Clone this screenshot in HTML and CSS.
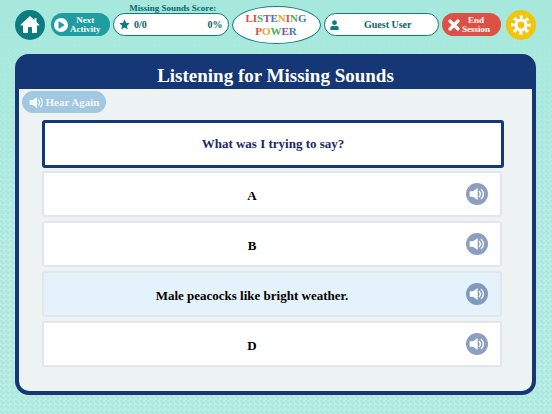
FILE: index.html
```html
<!DOCTYPE html>
<html lang="en">
<head>
  <meta charset="UTF-8">
  <meta name="viewport" content="width=device-width, initial-scale=1">
  <title>Listening for Missing Sounds</title>
  <link rel="stylesheet" href="styles.css">
</head>
<body>

<!-- shared speaker icon -->
<svg class="sprite" aria-hidden="true">
  <symbol id="speaker" viewBox="0 0 24 24">
    <path d="M1 8h5l7-5v18l-7-5H1z" fill="currentColor"/>
    <path d="M15.500 8q3 4 0 8M18.500 5q6 7 0 14" fill="none" stroke="currentColor" stroke-width="2" stroke-linecap="round"/>
  </symbol>
</svg>

<header class="topbar">
  <button class="round home" aria-label="Home">
    <svg viewBox="0 0 20 20" width="20" height="20"><path d="M10 1 .8 9.6q-.6.9.5.9H3V17q0 1 1 1h4v-5q0-1 1-1h2q1 0 1 1v5h4q1 0 1-1v-6.500h1.700q1.100 0 .5-.9L16.500 7V3h-2v2.100z" fill="#fff"/></svg>
  </button>

  <button class="pill next">
    <svg viewBox="0 0 14 14" width="14" height="14"><circle cx="7" cy="7" r="7" fill="#fff"/><path d="M4.500 4v6q0 .8.8.4L10 7.600q.8-.6 0-1.200L5.300 3.600q-.8-.4-.8.4z" fill="#1f9da0"/></svg>
    <span>Next<br>Activity</span>
  </button>

  <div class="score">
    <div class="score-label">Missing Sounds Score:</div>
    <div class="field">
      <svg viewBox="0 0 12 12" width="11" height="11"><path d="m6 .3 1.700 3.700 4 .5-3 2.800.8 4L6 9.300l-3.500 2 .8-4-3-2.800 4-.5z" fill="#0c7c80"/></svg>
      <span class="points">0/0</span>
      <span>0%</span>
    </div>
  </div>

  <div class="logo">
    <div><span class="red">L</span><span class="red">I</span><span class="green">S</span><span class="purple">T</span><span class="blue">E</span><span class="orange">N</span><span class="red">I</span><span class="green">N</span><span class="blue">G</span></div>
    <div><span class="red">P</span><span class="orange">O</span><span class="green">W</span><span class="purple">E</span><span class="blue">R</span></div>
  </div>

  <div class="user">
    <div class="field">
      <svg viewBox="0 0 10 12" width="9" height="10"><circle cx="5" cy="3.200" r="2.900" fill="#0c7c80"/><path d="M0 12v-2q0-3 3-3 2 1 4 0 3 0 3 3v2z" fill="#0c7c80"/></svg>
      <span class="name">Guest User</span>
    </div>
  </div>

  <button class="pill end">
    <svg viewBox="0 0 12 12" width="12" height="12"><path d="m2 2 8 8M10 2l-8 8" stroke="#fff" stroke-width="3.200" stroke-linecap="round"/></svg>
    <span>End<br>Session</span>
  </button>

  <button class="round settings" aria-label="Settings">
    <svg viewBox="0 0 20 20" width="20" height="20">
      <g fill="none" stroke="#fff">
        <circle cx="10" cy="10" r="5" stroke-width="3.200"/>
        <circle cx="10" cy="10" r="8" stroke-width="3.600" stroke-dasharray="3 3.283" stroke-dashoffset="1.500"/>
      </g>
    </svg>
  </button>
</header>

<main class="panel">
  <h1>Listening for Missing Sounds</h1>
  <div class="content">
    <button class="hear">
      <svg width="15" height="15"><use href="#speaker"/></svg>
      Hear Again
    </button>

    <div class="question">What was I trying to say?</div>

    <div class="answers">
      <div class="answer">
        <button class="choice">A</button>
        <button class="listen" aria-label="Listen to A"><svg width="16" height="16"><use href="#speaker"/></svg></button>
      </div>
      <div class="answer">
        <button class="choice">B</button>
        <button class="listen" aria-label="Listen to B"><svg width="16" height="16"><use href="#speaker"/></svg></button>
      </div>
      <div class="answer active">
        <button class="choice">Male peacocks like bright weather.</button>
        <button class="listen" aria-label="Listen to C"><svg width="16" height="16"><use href="#speaker"/></svg></button>
      </div>
      <div class="answer">
        <button class="choice">D</button>
        <button class="listen" aria-label="Listen to D"><svg width="16" height="16"><use href="#speaker"/></svg></button>
      </div>
    </div>
  </div>
</main>

</body>
</html>
```

FILE: styles.css
```css
* { box-sizing: border-box; }

body {
  margin: 0;
  min-height: 100vh;
  padding: 0 16px 16px 15px;
  font-family: Georgia, "Liberation Serif", serif;
  font-weight: bold;
  background:
    linear-gradient(#a6e8dc 0, #a6e8dc00 60%),
    radial-gradient(circle at 1px 1px, #ade6df 1px, transparent 2px) 0 0 / 5px 5px,
    radial-gradient(circle at 3px 3px, #ade6df 1px, transparent 2px) 0 0 / 5px 5px,
    #bbf0e7;
}

button {
  font: inherit;
  border: none;
  padding: 0;
  cursor: pointer;
}

svg { display: block; flex-shrink: 0; }

.sprite { position: absolute; width: 0; height: 0; }

/* Top bar */
.topbar {
  display: flex;
  align-items: center;
  height: 54px;
  padding-bottom: 5px;
  gap: 3px;
}

.round {
  display: flex;
  align-items: center;
  justify-content: center;
  width: 30px;
  height: 30px;
  border-radius: 50%;
  flex-shrink: 0;
}

.home { background: #0c7c80; margin-right: 3px; }
.settings { background: #f1c40f; margin-left: 2px; }

.pill {
  display: flex;
  align-items: center;
  gap: 2px;
  width: 59px;
  height: 23px;
  border-radius: 12px;
  color: #fff;
  font-size: 9px;
  line-height: 9px;
  flex-shrink: 0;
}

.next { background: #1f9da0; padding-left: 3px; }
.end { background: #dc5146; padding-left: 6px; }

.score, .user { flex: 1; color: #0c6468; }
.score { padding-bottom: 10px; }

.score-label {
  height: 10px;
  padding-left: 4px;
  font-size: 9px;
  line-height: 10px;
  text-align: center;
  white-space: nowrap;
}

.field {
  display: flex;
  align-items: center;
  height: 23px;
  padding: 0 5px;
  border: 1px solid #0c7c80;
  border-radius: 12px;
  background: #fff;
  font-size: 10px;
}

.points { flex: 1; padding-left: 4px; }
.name { flex: 1; padding-left: 4px; text-align: center; }

.logo {
  display: flex;
  flex-direction: column;
  justify-content: center;
  width: 89px;
  height: 38px;
  border: 1px solid #0c7c80;
  border-radius: 50%;
  background: #fff;
  font-size: 11px;
  line-height: 13px;
  text-align: center;
  flex-shrink: 0;
}

.red { color: #dc4c42; }
.green { color: #4cae55; }
.purple { color: #8d49a5; }
.blue { color: #3f78bd; }
.orange { color: #ef9f2e; }

/* Activity panel */
.panel {
  border: 4px solid #163775;
  border-top: none;
  border-radius: 14px;
  background: #163775;
}

h1 {
  margin: 0;
  padding-top: 9px;
  height: 35px;
  color: #fff;
  font-size: 19px;
  line-height: 26px;
  text-align: center;
}

.content {
  padding: 2px 28px 24px 23px;
  border-radius: 0 0 10px 10px;
  background: #edf2f3;
}

.hear {
  display: flex;
  align-items: center;
  justify-content: center;
  gap: 2px;
  width: 84px;
  height: 22px;
  margin-left: -20px;
  border-radius: 11px;
  background: #a2c7e0;
  color: #f3f8fb;
  font-size: 11px;
}

.question {
  display: flex;
  align-items: center;
  justify-content: center;
  height: 48px;
  margin: 7px 0 3px;
  border: 3px solid #163775;
  border-radius: 3px;
  background: #fff;
  color: #1c2966;
  font-size: 13px;
}

.answers {
  display: flex;
  flex-direction: column;
  gap: 4px;
  padding-right: 2px;
}

.answer {
  display: grid;
  grid-template-columns: 1fr 34px;
  column-gap: 6px;
  align-items: center;
  height: 46px;
  border: 2px solid #e3e6e8;
  border-radius: 2px;
  background: #fff;
}

.active { background: #e4f2fb; }

.choice {
  height: 100%;
  padding-top: 3px;
  background: none;
  color: #000;
  font-size: 13px;
}

.listen {
  display: flex;
  align-items: center;
  justify-content: center;
  width: 22px;
  height: 22px;
  border-radius: 50%;
  background: #8c9fc0;
  color: #fff;
}

.active .listen { background: #7f9abd; }
```
